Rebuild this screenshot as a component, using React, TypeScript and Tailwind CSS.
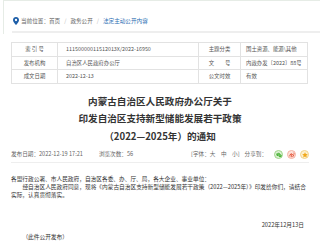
import { RiWechatFill, RiWeiboFill, RiStarFill } from 'react-icons/ri'

const font = { fontFamily: '"Noto Sans CJK SC", "Noto Sans", sans-serif' }

function PinIcon() {
  return (
    <svg width="6" height="8" viewBox="0 0 12 16" className="shrink-0">
      <path d="M6 0C2.7 0 0 2.6 0 5.9 0 10.3 6 16 6 16s6-5.7 6-10.1C12 2.6 9.3 0 6 0z" fill="#1d5ea8" />
      <circle cx="6" cy="6" r="2.3" fill="#fff" />
    </svg>
  )
}

const rows = [
  ['索 引 号', '11150000011512013X/2022-16950', '主题分类', '国土资源、能源\\其他'],
  ['发布机构', '自治区人民政府办公厅', '文　　号', '内政办发〔2022〕88号'],
  ['成文日期', '2022-12-13', '公文时效', '有效'],
]

export default function App() {
  return (
    <div className="w-[320px] h-[243px] overflow-hidden bg-white text-[#333]" style={font}>
      {/* Breadcrumb */}
      <div className="ml-[3px] border-l border-t border-[#e6ece6] h-[34px] pt-[14px]">
        <div className="flex items-center pl-[9px] text-[5.6px] leading-[12px] text-[#666]">
          <PinIcon />
          <span className="ml-[2px]">当前位置：</span>
          <span>首页</span>
          <span className="mx-[4px] text-[#bbb]">/</span>
          <span>政务公开</span>
          <span className="mx-[4px] text-[#bbb]">/</span>
          <span className="text-[#2a6db3]">法定主动公开内容</span>
        </div>
        <div className="ml-[8px] mt-[4px] h-[2px] bg-[#eeeeee]" />
      </div>

      {/* Info table */}
      <div className="ml-[11px] mt-[8px] w-[297px] border-l border-t border-[#e2e2e2] text-[5.4px] text-[#555]">
        {rows.map((r) => (
          <div key={r[0]} className="grid h-[13.5px] grid-cols-[46px_141px_42px_1fr] whitespace-nowrap">
            <div className="flex items-center justify-center border-b border-r border-[#e2e2e2]">{r[0]}</div>
            <div className="flex items-center border-b border-r border-[#e2e2e2] pl-[8px]">{r[1]}</div>
            <div className="flex items-center justify-center border-b border-r border-[#e2e2e2]">{r[2]}</div>
            <div className="flex items-center border-b border-r border-[#e2e2e2] pl-[5px]">{r[3]}</div>
          </div>
        ))}
      </div>

      {/* Title */}
      <div className="pt-[9px] text-center text-[9.6px] font-bold leading-[17.5px] text-[#333]">
        <div>内蒙古自治区人民政府办公厅关于</div>
        <div>印发自治区支持新型储能发展若干政策</div>
        <div>（2022—2025年）的通知</div>
      </div>

      {/* Meta */}
      <div className="mx-[11px] mt-[4px] flex h-[14px] items-center justify-between border-b border-[#eeeeee] pb-[2px] text-[5.6px] text-[#666]">
        <div className="flex gap-[16px]">
          <span>发布日期：2022-12-19 17:21</span>
          <span>浏览次数：56</span>
        </div>
        <div className="flex items-center gap-[4px]">
          <span>[字体：大　中　小]</span>
          <span className="ml-[1px]">分享到：</span>
          <span className="ml-[3px] flex h-[9px] w-[9px] items-center justify-center rounded-full border border-[#9ed58a] bg-[#dff2d6] text-[#4cb33a]">
            <RiWechatFill size={6} />
          </span>
          <span className="flex h-[9px] w-[9px] items-center justify-center rounded-full border border-[#f4b2a4] bg-[#fde3dc] text-[#e5573c]">
            <RiWeiboFill size={6} />
          </span>
          <span className="flex h-[9px] w-[9px] items-center justify-center rounded-full border border-[#f2d38a] bg-[#fdf0cf] text-[#f0a81c]">
            <RiStarFill size={6} />
          </span>
        </div>
      </div>

      {/* Body */}
      <div className="mx-[11px] mt-[12px] text-[5.7px] leading-[8px] text-[#333]">
        <p>各盟行政公署、市人民政府，自治区各委、办、厅、局，各大企业、事业单位：</p>
        <p className="indent-[2em]">
          经自治区人民政府同意，现将《内蒙古自治区支持新型储能发展若干政策（2022—2025年）》印发给你们，请结合实际，认真贯彻落实。
        </p>
        <p className="mt-[22px] pr-[5px] text-right">2022年12月13日</p>
        <p className="mt-[4px] indent-[2em]">（此件公开发布）</p>
      </div>
    </div>
  )
}
